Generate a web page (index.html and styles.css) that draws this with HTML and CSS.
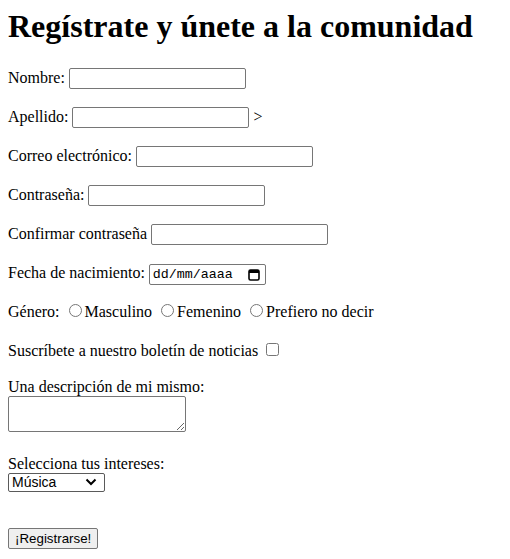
FILE: index.html
```html
<!DOCTYPE html>
<html lang="es">
<head>
<meta charset="utf-8">
<title>Registro</title>
<link rel="stylesheet" href="styles.css">
</head>
<body class="page">
<h1 class="title">Regístrate y únete a la comunidad</h1>
<form class="form">
<p class="row"><label for="nombre">Nombre:</label> <input class="field" type="text" id="nombre"></p>
<p class="row"><label for="apellido">Apellido:</label> <input class="field" type="text" id="apellido"> &gt;</p>
<p class="row"><label for="correo">Correo electrónico:</label> <input class="field" type="email" id="correo"></p>
<p class="row"><label for="pass">Contraseña:</label> <input class="field" type="password" id="pass"></p>
<p class="row"><label for="pass2">Confirmar contraseña</label> <input class="field" type="password" id="pass2"></p>
<p class="row"><label for="fecha">Fecha de nacimiento:</label> <span class="date" id="fecha" tabindex="0"><span class="date-text">dd/mm/aaaa</span><svg class="cal" width="12" height="12" viewBox="0 0 12 12"><rect x="1" y="1" width="10" height="10" rx="1.5" fill="none" stroke="#000" stroke-width="1.6"/><rect x="1" y="1" width="10" height="3" fill="#000"/></svg></span></p>
<p class="row">Género: <input class="radio" type="radio" name="g" id="m"><label for="m">Masculino</label> <input class="radio" type="radio" name="g" id="f"><label for="f">Femenino</label> <input class="radio" type="radio" name="g" id="n"><label for="n">Prefiero no decir</label></p>
<p class="row"><label for="news">Suscríbete a nuestro boletín de noticias</label> <input class="check" type="checkbox" id="news"></p>
<p class="block block-area"><label for="desc">Una descripción de mi mismo:</label><br><textarea class="area" id="desc"></textarea></p>
<p class="block"><label for="int">Selecciona tus intereses:</label><br><select class="sel" id="int"><option>Música</option><option>Deportes</option><option>Tecnología</option></select></p>
<br>
<button class="btn" type="submit">¡Registrarse!</button>
</form>
</body>
</html>
```
FILE: styles.css
```css
.page {
  margin: 8px;
  font-family: "Liberation Serif", "Times New Roman", serif;
  font-size: 16px;
  color: #000;
  background: #fff;
}
.title {
  font-size: 32px;
  font-weight: bold;
  margin: 0 0 21.44px;
}
.row {
  margin: 16px 0;
  line-height: 23px;
  height: 23px;
}
.block {
  margin: 16px 0;
}
.block-area {
  padding-bottom: 2.5px;
}
.field {
  font-family: "Liberation Sans", Arial, sans-serif;
  font-size: 13.333px;
  width: 177px;
  height: 21px;
  box-sizing: border-box;
  border: 1px solid #767676;
  border-radius: 2px;
  padding: 1px 2px;
}
.date {
  display: inline-flex;
  align-items: center;
  justify-content: space-between;
  width: 117px;
  height: 21px;
  box-sizing: border-box;
  border: 1px solid #767676;
  border-radius: 2px;
  padding: 0 5px 0 3px;
  line-height: 19px;
  vertical-align: baseline;
}
.date-text {
  font-family: "Liberation Mono", "DejaVu Sans Mono", monospace;
  font-size: 13.333px;
  color: #000;
}
.cal {
  display: block;
}
.radio {
  margin: 3px 3px 0 5px;
}
.check {
  margin: 3px 3px 3px 4px;
}
.area {
  font-family: "Liberation Mono", monospace;
  font-size: 13.333px;
  width: 178px;
  height: 36px;
  box-sizing: border-box;
  border: 1px solid #767676;
  border-radius: 2px;
}
.sel {
  appearance: none;
  -webkit-appearance: none;
  font-family: "Liberation Sans", Arial, sans-serif;
  font-size: 14px;
  color: #000;
  width: 97px;
  height: 19px;
  box-sizing: border-box;
  border: 1px solid #5a5a5a;
  border-radius: 2px;
  padding: 0 0 0 3px;
  background: #fff url("data:image/svg+xml;utf8,<svg xmlns='http://www.w3.org/2000/svg' width='12' height='8' viewBox='0 0 12 8'><path d='M1.5 1.5 L6 6 L10.5 1.5' fill='none' stroke='black' stroke-width='2'/></svg>") no-repeat right 7px center;
}
.btn {
  font-family: "Liberation Sans", Arial, sans-serif;
  font-size: 13.333px;
  padding: 1px 6px;
  height: 21px;
  margin-top: 2.5px;
  border: 1px solid #767676;
  border-radius: 2px;
  background: #efefef;
  color: #000;
}
```
